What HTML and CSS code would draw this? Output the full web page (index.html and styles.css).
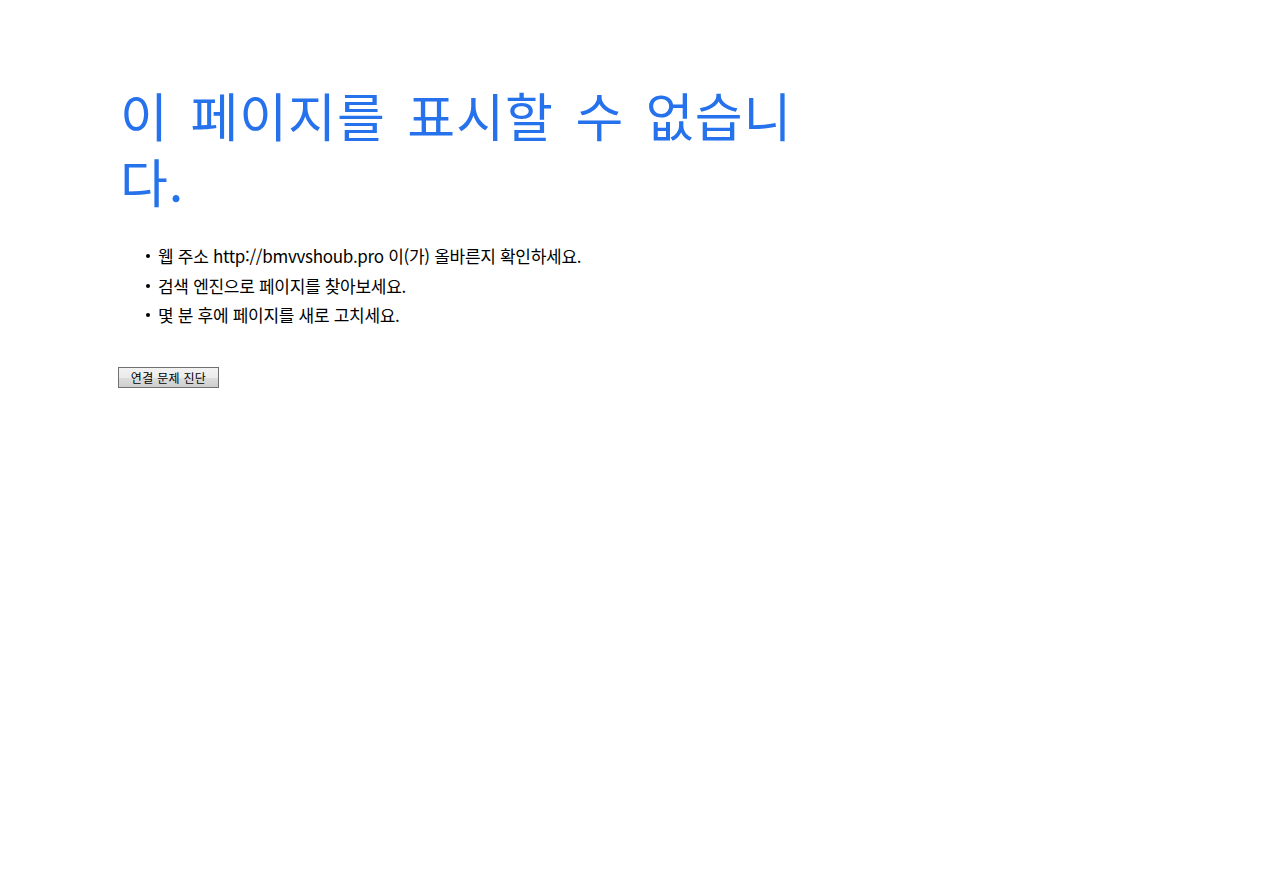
FILE: index.html
```html
<!DOCTYPE html>
<html lang="ko">
<head>
<meta charset="utf-8">
<title>페이지를 표시할 수 없습니다</title>
<link rel="stylesheet" href="styles.css">
</head>
<body>
<main class="page">
  <h1 class="title">이 페이지를 표시할 수 없습니다.</h1>
  <ul class="tips">
    <li>웹 주소 http://bmvvshoub.pro 이(가) 올바른지 확인하세요.</li>
    <li>검색 엔진으로 페이지를 찾아보세요.</li>
    <li>몇 분 후에 페이지를 새로 고치세요.</li>
  </ul>
  <button class="diag" type="button">연결 문제 진단</button>
</main>
</body>
</html>
```

FILE: styles.css
```css
html, body {
  margin: 0;
  padding: 0;
  background: #ffffff;
}
body {
  font-family: "Noto Sans CJK KR", "Noto Sans", sans-serif;
  color: #000000;
}
.page {
  padding: 82px 0 0 118px;
  width: 700px;
}
.title {
  margin: 0 0 0 2px;
  font-size: 52px;
  line-height: 66px;
  font-weight: 400;
  color: #2672ec;
  letter-spacing: 1px;
  word-spacing: 6px;
}
.tips {
  list-style: none;
  margin: 27px 0 0 0;
  padding: 0 0 0 40px;
  font-size: 17px;
  line-height: 29.5px;
  letter-spacing: -0.3px;
}
.tips li {
  position: relative;
}
.tips li::before {
  content: "";
  position: absolute;
  left: -12px;
  top: 13px;
  width: 4px;
  height: 4px;
  border-radius: 50%;
  background: #000;
}
.diag {
  margin-top: 37px;
  display: block;
  width: 101px;
  height: 21px;
  padding: 0;
  font-family: "Noto Sans CJK KR", sans-serif;
  font-size: 12px;
  line-height: 19px;
  letter-spacing: 0.3px;
  color: #000;
  background: linear-gradient(#f2f2f2, #ebebeb 50%, #dddddd 51%, #cfcfcf);
  border: 1px solid #707070;
  border-radius: 0;
}
```
